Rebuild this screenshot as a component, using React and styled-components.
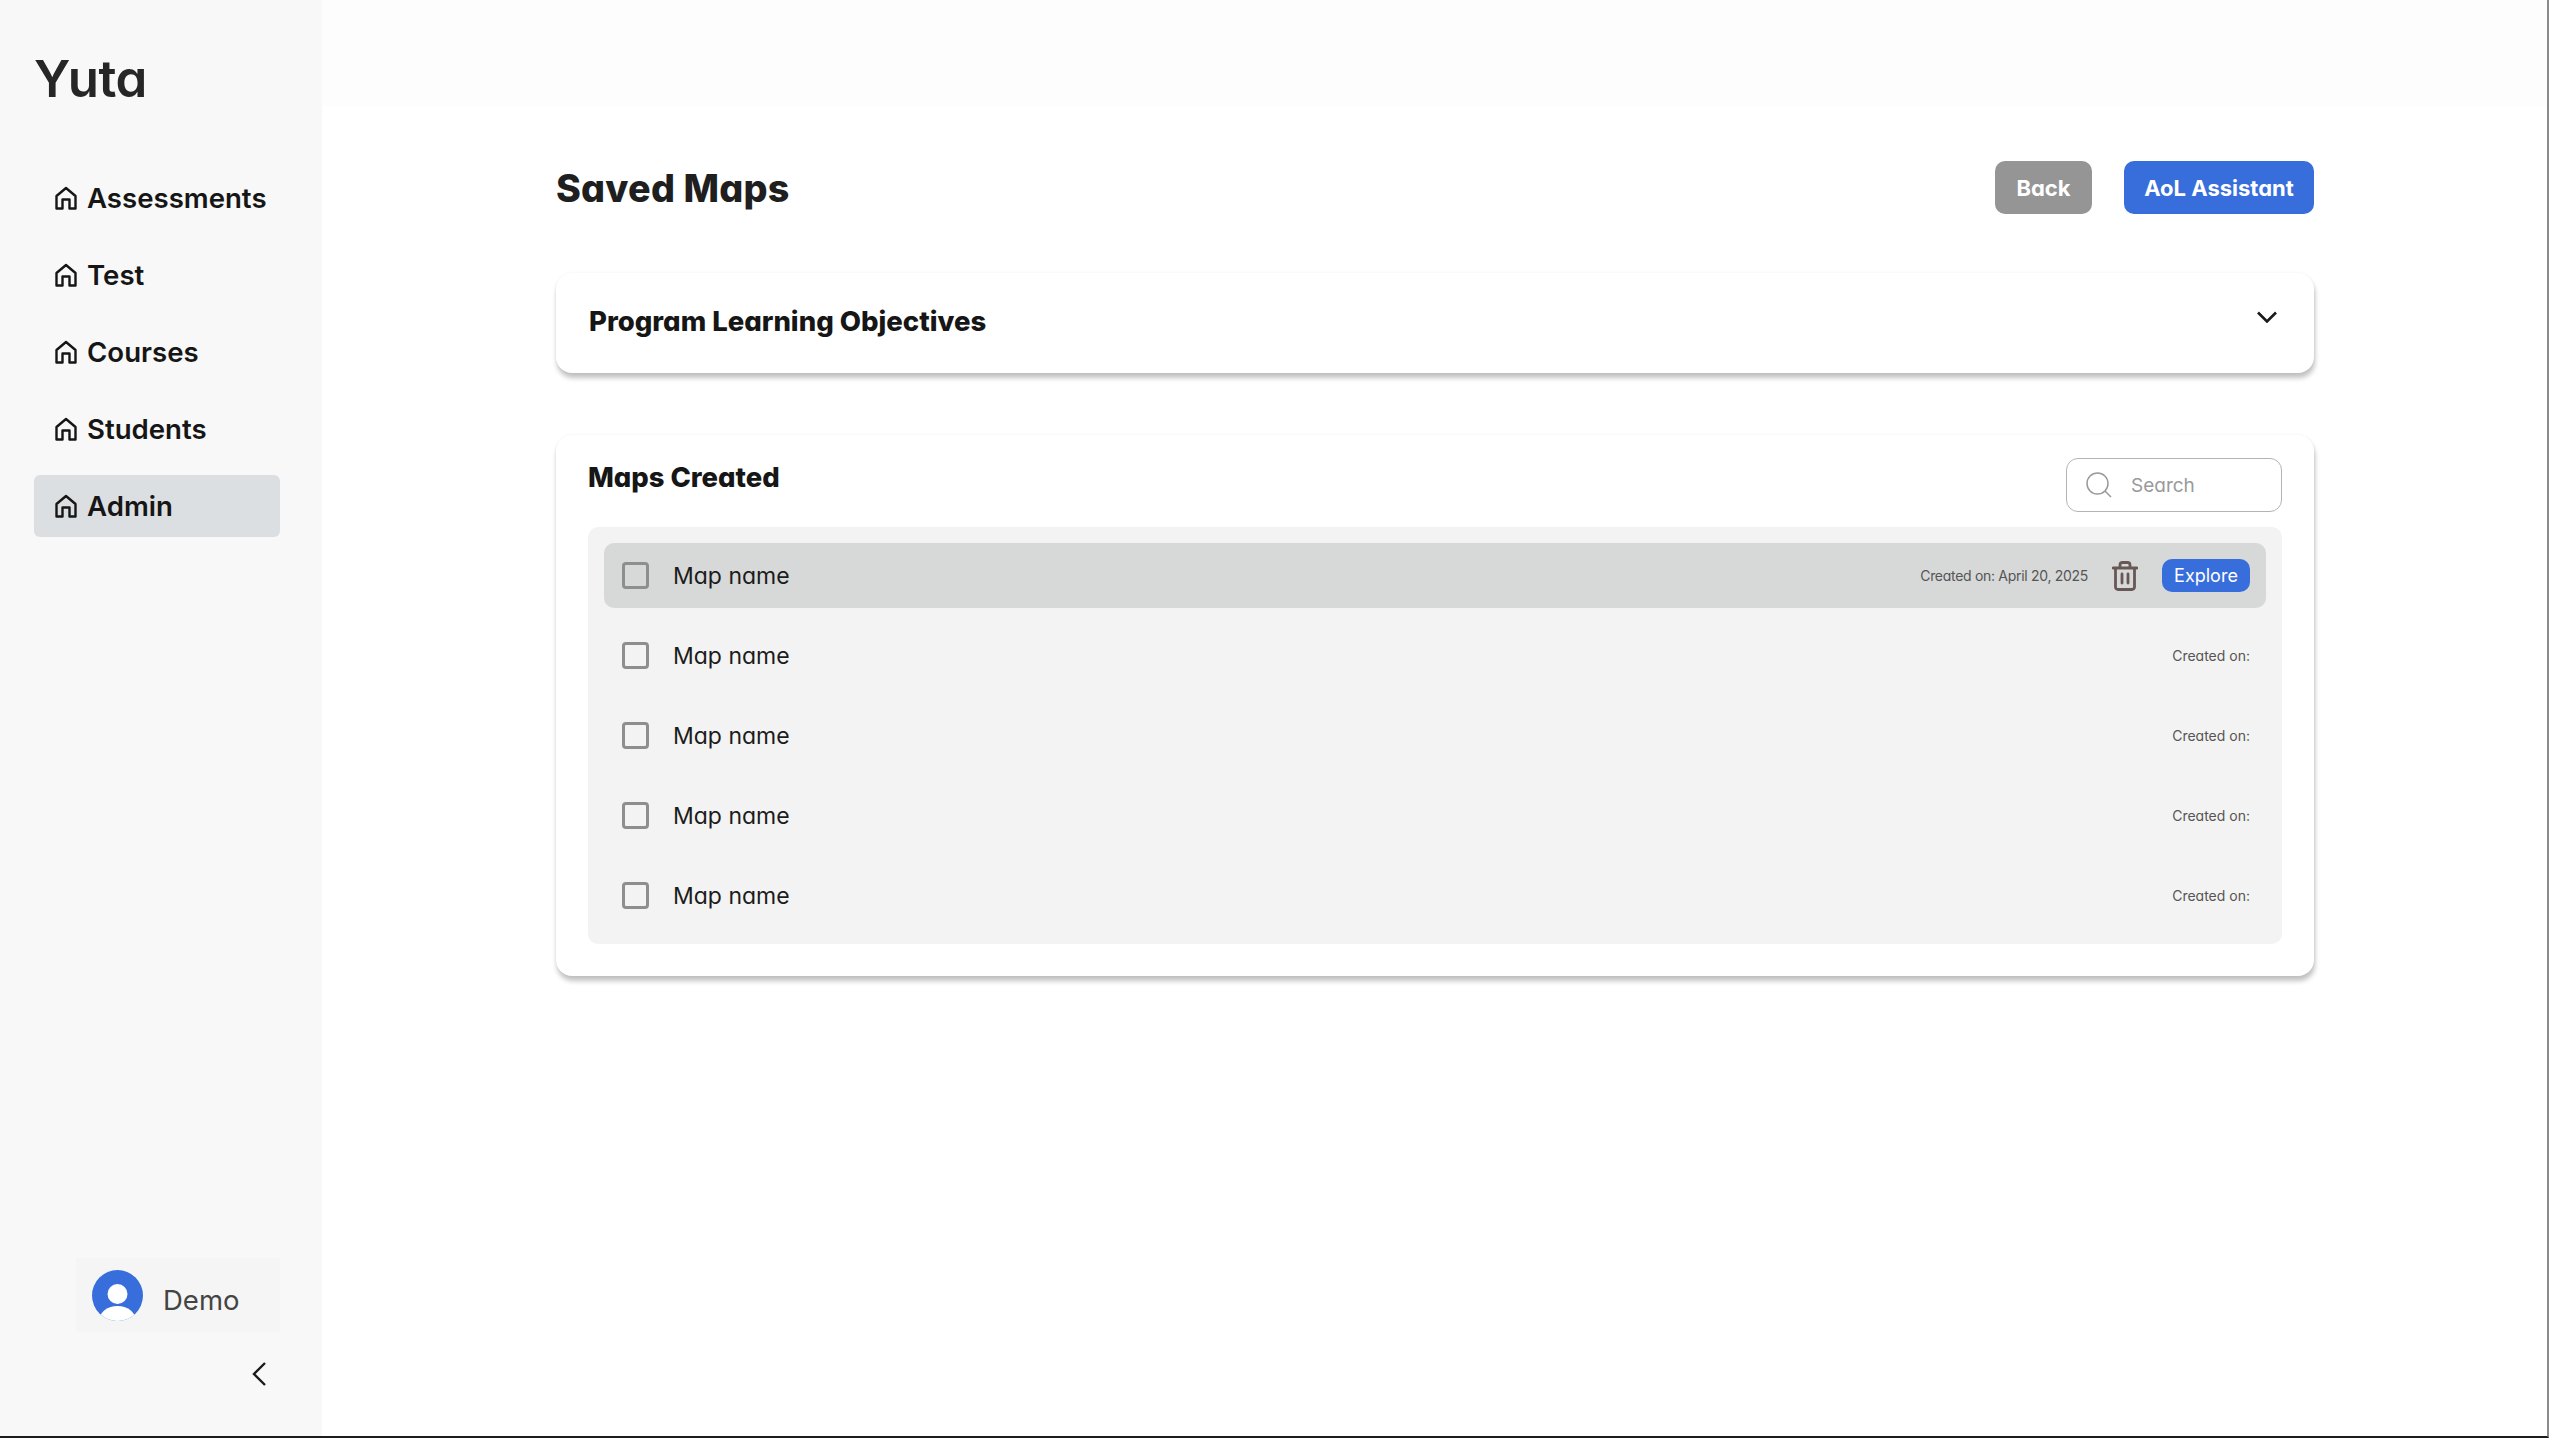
import React from "react";
import styled, { createGlobalStyle } from "styled-components";

const Global = createGlobalStyle`
  html, body { margin: 0; padding: 0; background: #fff; }
  * { box-sizing: border-box; }
  body { font-family: Inter, "Liberation Sans", sans-serif; font-feature-settings: "cv11" 1; color: #161616; }
`;
const Page = styled.div`
  display: flex; width: 2549px; height: 1438px; overflow: hidden;
  border-bottom: 2px solid #1c1c1c; border-right: 2px solid #8a8a8a;
`;
const Sidebar = styled.aside`
  width: 322px; flex: none; background: #f8f8f8; display: flex; flex-direction: column;
  padding: 45px 42px 0 34px;
`;
const Logo = styled.div`
  font-size: 51px; font-weight: 600; line-height: 66px; height: 66px; color: #262626; letter-spacing: -0.5px;
  padding-top: 1px;
`;
const Nav = styled.nav`
  display: flex; flex-direction: column; gap: 15px; margin-top: 56px;
`;
const NavItem = styled.div`
  height: 62px; display: flex; align-items: center; gap: 10px; padding-left: 21px; border-radius: 6px;
  background: ${p => (p.$active ? "#dcdfe1" : "transparent")};
  font-size: 27.6px; font-weight: 600; color: #161616;
`;
const Spacer = styled.div` flex: 1; `;
const UserBox = styled.div`
  margin-left: 42px; width: 204px; height: 74px; background: #f5f5f5; display: flex; align-items: center;
  gap: 20px; padding-left: 16px;
`;
const UserName = styled.span` font-size: 27.5px; color: #444; padding-top: 10px; `;
const Collapse = styled.div`
  display: flex; justify-content: flex-end; padding: 30px 14px 50px 0;
`;
const Main = styled.main`
  flex: 1; display: flex; flex-direction: column; padding: 161px 233px 0 234px;
  background: linear-gradient(#fdfdfd 0, #fdfdfd 106px, #fff 106px);
`;
const Header = styled.header`
  display: flex; align-items: center; justify-content: space-between; height: 53px;
`;
const Title = styled.h1` margin: 0; font-size: 37.7px; font-weight: 800; color: #1f1f1f; letter-spacing: 0.2px; `;
const Actions = styled.div` display: flex; gap: 32px; `;
const Button = styled.button`
  height: 53px; width: ${p => p.$w}px; border: 0; border-radius: 10px; color: #fff;
  background: ${p => (p.$primary ? "#386edb" : "#959595")};
  font: 700 22px Inter, sans-serif; font-feature-settings: "cv11" 1;
`;
const Card = styled.section`
  background: #fff; border-radius: 16px;
  box-shadow: 1px 5px 5px rgba(0,0,0,.24), 0 0 3px rgba(0,0,0,.06);
`;
const Accordion = styled(Card)`
  margin-top: 59px; height: 100px; padding: 0 37px 0 33px; display: flex; align-items: center; justify-content: space-between;
`;
const AccordionTitle = styled.h2` margin: 0 0 4px; font-size: 27.5px; font-weight: 800; color: #161616; `;
const AccordionToggle = styled.span` display: flex; margin-bottom: 12px; `;
const MapsCard = styled(Card)`
  margin-top: 62px; height: 541px; padding: 22px 32px 0 32px;
`;
const MapsHead = styled.div` display: flex; justify-content: space-between; align-items: flex-start; height: 70px; `;
const MapsTitle = styled.h2` margin: 0; font-size: 27.4px; font-weight: 800; line-height: 40px; `;
const Search = styled.div`
  margin-top: 1px; width: 216px; height: 54px; border: 1.5px solid #b4b4b8; border-radius: 12px; display: flex; align-items: center;
  gap: 19px; padding-left: 19px; color: #9a9a9a; font-size: 19px;
`;
const List = styled.div`
  background: #f3f3f3; border-radius: 10px; padding: 16px; display: flex; flex-direction: column; gap: 15px; height: 417px;
`;
const Row = styled.div`
  height: 65px; border-radius: 10px; display: flex; align-items: center; padding: 0 16px 0 18px;
  background: ${p => (p.$active ? "#d7d8d8" : "transparent")};
`;
const Check = styled.span`
  width: 27px; height: 27px; flex: none; border: 3px solid #8e8e8e; border-radius: 4px; margin-right: 24px;
`;
const MapName = styled.span` font-size: 23px; color: #1c1c1c; flex: 1; `;
const Created = styled.span`
  font-size: 14px; color: #555; letter-spacing: ${p => (p.$tight ? "-0.3px" : "0")};
`;
const Trash = styled.span` display: flex; margin: 0 24px 0 24px; `;
const Explore = styled.button`
  width: 88px; height: 33px; border: 0; border-radius: 10px; background: #386edb; color: #fff;
  font: 400 18px Inter, sans-serif; font-feature-settings: "cv11" 1; padding: 0;
`;

const HomeIcon = () => (
  <svg width="22" height="24" viewBox="0 0 22 24" fill="none" stroke="#161616" strokeWidth="2.4" strokeLinejoin="round">
    <path d="M1.5 22.5V10L11 2l9.5 8v12.5h-6v-9h-7v9z" />
  </svg>
);
const Avatar = () => (
  <svg width="51" height="51" viewBox="0 0 51 51">
    <defs><clipPath id="av"><circle cx="25.5" cy="25.5" r="25.5" /></clipPath></defs>
    <g clipPath="url(#av)">
      <rect width="51" height="51" fill="#386edb" />
      <circle cx="25.5" cy="24" r="10" fill="#fff" />
      <ellipse cx="25.5" cy="50" rx="18" ry="14" fill="#fff" />
    </g>
  </svg>
);
const ChevronLeft = () => (
  <svg width="14" height="24" viewBox="0 0 14 24" fill="none" stroke="#1a1a1a" strokeWidth="2.4"><path d="M13 1L2 12l11 11" /></svg>
);
const ChevronDown = () => (
  <svg width="20" height="12" viewBox="0 0 20 12" fill="none" stroke="#1a1a1a" strokeWidth="2.6"><path d="M1 1.5l9 9 9-9" /></svg>
);
const SearchIcon = () => (
  <svg width="26" height="26" viewBox="0 0 26 26" fill="none" stroke="#9a9a9a" strokeWidth="1.5"><circle cx="11.5" cy="11.5" r="10.5" /><path d="M19 19l6 6" /></svg>
);
const TrashIcon = () => (
  <svg width="26" height="30" viewBox="0 0 26 30" fill="none" stroke="#675856" strokeWidth="2.8" strokeLinecap="round" strokeLinejoin="round">
    <path d="M1 7h24M8 7V4a2.5 2.5 0 0 1 2.5-2.5h5A2.5 2.5 0 0 1 18 4v3M3.5 7v19a2.5 2.5 0 0 0 2.5 2.5h14a2.5 2.5 0 0 0 2.5-2.5V7M10 13v9M16 13v9" />
  </svg>
);

const items = ["Assessments", "Test", "Courses", "Students", "Admin"];

export default function App() {
  return (
    <Page>
      <Global />
      <Sidebar>
        <Logo>Yuta</Logo>
        <Nav>
          {items.map(t => (
            <NavItem key={t} $active={t === "Admin"}><HomeIcon />{t}</NavItem>
          ))}
        </Nav>
        <Spacer />
        <UserBox><Avatar /><UserName>Demo</UserName></UserBox>
        <Collapse><ChevronLeft /></Collapse>
      </Sidebar>
      <Main>
        <Header>
          <Title>Saved Maps</Title>
          <Actions>
            <Button $w={97}>Back</Button>
            <Button $w={190} $primary>AoL Assistant</Button>
          </Actions>
        </Header>
        <Accordion>
          <AccordionTitle>Program Learning Objectives</AccordionTitle>
          <AccordionToggle><ChevronDown /></AccordionToggle>
        </Accordion>
        <MapsCard>
          <MapsHead>
            <MapsTitle>Maps Created</MapsTitle>
            <Search><SearchIcon />Search</Search>
          </MapsHead>
          <List>
            {[0, 1, 2, 3, 4].map(i => (
              <Row key={i} $active={i === 0}>
                <Check />
                <MapName>Map name</MapName>
                {i === 0 ? (
                  <>
                    <Created $tight>Created on: April 20, 2025</Created>
                    <Trash><TrashIcon /></Trash>
                    <Explore>Explore</Explore>
                  </>
                ) : (
                  <Created>Created on:</Created>
                )}
              </Row>
            ))}
          </List>
        </MapsCard>
      </Main>
    </Page>
  );
}
